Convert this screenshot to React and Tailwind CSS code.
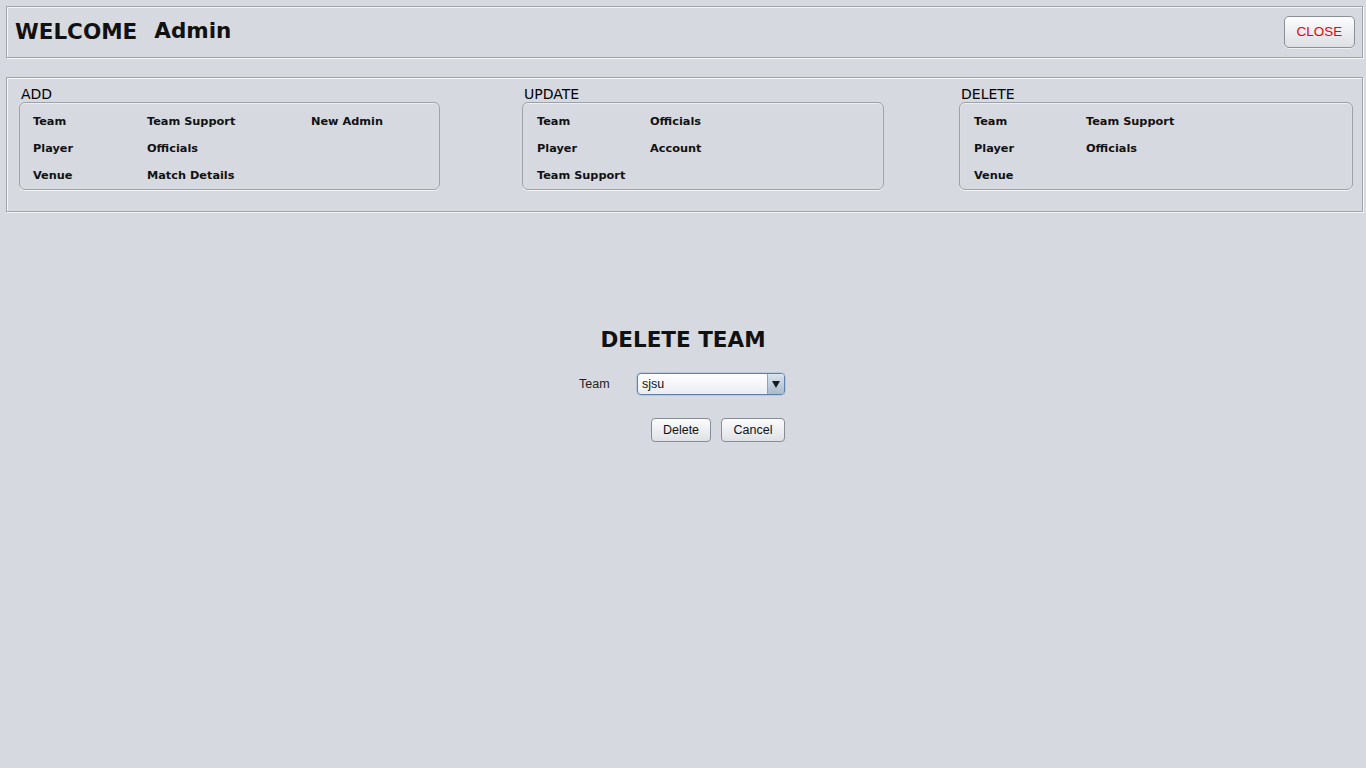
import React from "react";

const boldFont = { fontFamily: '"DejaVu Sans", Verdana, sans-serif' };

function Group({ title, width, cols, rows, pl }) {
  return (
    <div className="flex shrink-0 flex-col" style={{ width }}>
      <div className="ml-[2px] h-[16px] text-[14px] leading-[16px] text-black" style={boldFont}>
        {title}
      </div>
      <div
        className="rounded-[6px] border border-[#9da2aa] bg-[#d6d9df] pt-[6px] shadow-[inset_0_1px_1px_rgba(255,255,255,0.6),0_1px_0_rgba(255,255,255,0.7)]"
        style={{ paddingLeft: pl }}
      >
        {rows.map((row, i) => (
          <div key={i} className={`flex items-center ${i === 2 ? "h-[26px]" : "h-[27px]"}`}>
            {row.map((cell, j) => (
              <div
                key={j}
                className="shrink-0 text-[11.3px] font-bold text-[#111]"
                style={{ ...boldFont, width: cols[j] }}
              >
                {cell}
              </div>
            ))}
          </div>
        ))}
      </div>
    </div>
  );
}

export default function App() {
  return (
    <div className="min-h-[768px] w-full bg-[#d6d9df] pt-[6px]" style={{ fontFamily: '"Liberation Sans", Arial, sans-serif' }}>
      {/* Top bar */}
      <div className="ml-[6px] mr-[3px] flex h-[52px] items-center border border-[#a0a4ab] pl-[8px] pr-[7px] shadow-[inset_1px_1px_0_#f4f5f7,1px_1px_0_#f4f5f7]">
        <div className="text-[21.5px] font-bold leading-none text-[#111]" style={boldFont}>
          WELCOME
        </div>
        <div className="ml-[17px] mt-[-3px] text-[21.5px] font-bold leading-none text-[#111]" style={boldFont}>
          Admin
        </div>
        <div className="flex-1" />
        <button className="flex h-[32px] w-[71px] items-center justify-center rounded-[5px] border border-[#8c9199] bg-gradient-to-b from-[#fdfdfe] to-[#dcdfe4] pt-[1px] text-[13.5px] text-[#f00000] shadow-[0_1px_0_rgba(255,255,255,0.6)]">
          CLOSE
        </button>
      </div>

      {/* Menu panel */}
      <div className="ml-[6px] mr-[3px] mt-[19px] flex border border-[#a0a4ab] pb-[21px] pl-[12px] pr-[9px] pt-[8px] shadow-[inset_1px_1px_0_#f4f5f7,1px_1px_0_#f4f5f7]">
        <Group
          title="ADD"
          width={421}
          pl={13}
          cols={[114, 164, 120]}
          rows={[
            ["Team", "Team Support", "New Admin"],
            ["Player", "Officials"],
            ["Venue", "Match Details"],
          ]}
        />
        <div className="w-[82px] shrink-0" />
        <Group
          title="UPDATE"
          width={362}
          pl={14}
          cols={[113, 160]}
          rows={[
            ["Team", "Officials"],
            ["Player", "Account"],
            ["Team Support"],
          ]}
        />
        <div className="w-[75px] shrink-0" />
        <Group
          title="DELETE"
          width={394}
          pl={14}
          cols={[112, 160]}
          rows={[
            ["Team", "Team Support"],
            ["Player", "Officials"],
            ["Venue"],
          ]}
        />
      </div>

      {/* Delete team form */}
      <div className="mt-[114px] flex flex-col items-center">
        <div className="h-[28px] text-[21.5px] font-bold leading-[28px] text-[#111]" style={boldFont}>
          DELETE TEAM
        </div>
        <div className="mt-[19px] flex w-[208px] flex-col pr-[2px]">
          <div className="flex h-[22px] items-center">
            <div className="w-[58px] text-[12.5px] text-[#222]">Team</div>
            <div className="flex h-[22px] w-[148px] items-stretch overflow-hidden rounded-[4px] border border-[#5f80a8] bg-gradient-to-b from-[#ffffff] to-[#e9edf3] shadow-[0_0_0_1px_rgba(150,180,215,0.45)]">
              <div className="flex flex-1 items-center pl-[4px] text-[12.5px] text-[#111]">sjsu</div>
              <div className="flex w-[17px] items-center justify-center border-l border-[#8fa3bd] bg-gradient-to-b from-[#dbe4ee] to-[#a9bacd]">
                <svg width="8" height="7" viewBox="0 0 8 7">
                  <path d="M0 0 L8 0 L4 7 Z" fill="#1a1a1a" />
                </svg>
              </div>
            </div>
          </div>
          <div className="mt-[23px] flex justify-end gap-[10px]">
            <button className="flex h-[24px] w-[60px] items-center justify-center rounded-[4px] border border-[#878d96] bg-gradient-to-b from-[#fcfcfd] to-[#dee1e6] text-[12.5px] text-[#111]">
              Delete
            </button>
            <button className="flex h-[24px] w-[64px] items-center justify-center rounded-[4px] border border-[#878d96] bg-gradient-to-b from-[#fcfcfd] to-[#dee1e6] text-[12.5px] text-[#111]">
              Cancel
            </button>
          </div>
        </div>
      </div>
    </div>
  );
}
